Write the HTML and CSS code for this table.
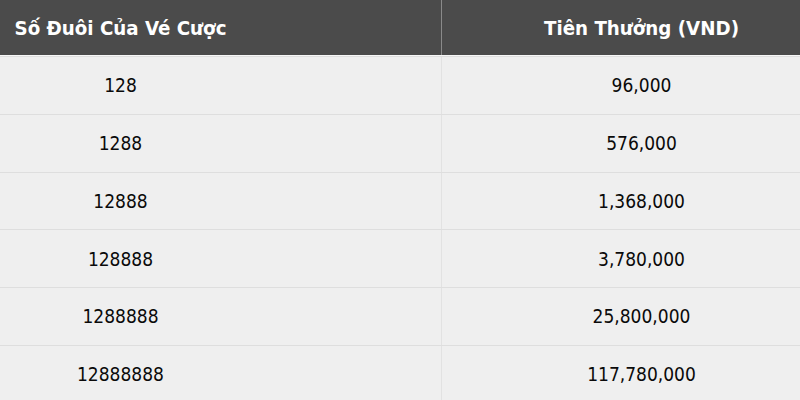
FILE: index.html
```html
<!DOCTYPE html>
<html lang="vi">
<head>
<meta charset="utf-8">
<link rel="stylesheet" href="styles.css">
</head>
<body>
<div class="table">
  <div class="row head">
    <div class="cell c1">Số Đuôi Của Vé Cược</div>
    <div class="cell c2">Tiên Thưởng (VND)</div>
  </div>
  <div class="row">
    <div class="cell c1">128</div>
    <div class="cell c2">96,000</div>
  </div>
  <div class="row">
    <div class="cell c1">1288</div>
    <div class="cell c2">576,000</div>
  </div>
  <div class="row">
    <div class="cell c1">12888</div>
    <div class="cell c2">1,368,000</div>
  </div>
  <div class="row">
    <div class="cell c1">128888</div>
    <div class="cell c2">3,780,000</div>
  </div>
  <div class="row">
    <div class="cell c1">1288888</div>
    <div class="cell c2">25,800,000</div>
  </div>
  <div class="row">
    <div class="cell c1">12888888</div>
    <div class="cell c2">117,780,000</div>
  </div>
</div>
</body>
</html>
```
FILE: styles.css
```css
html, body {
  margin: 0;
  padding: 0;
  width: 800px;
  height: 400px;
  overflow: hidden;
  background: #efefef;
}
.table {
  font-family: "DejaVu Sans Condensed", "DejaVu Sans", sans-serif;
  font-size: 19px;
  color: #0a0a0a;
}
.row {
  display: grid;
  grid-template-columns: 442px 358px;
  height: 57.75px;
  box-sizing: border-box;
  border-top: 1px solid #dedede;
  background: #efefef;
}
.row.head {
  height: 56px;
  border-top: none;
  border-bottom: 1px solid #f7f7f7;
  background: #4b4b4b;
  color: #fff;
  font-weight: bold;
  font-size: 20.3px;
}
.cell {
  display: flex;
  align-items: center;
  justify-content: center;
}
.c1 {
  padding-right: 200px;
  border-right: 1px solid #e2e2e2;
}
.head .c1 {
  border-right-color: #8a8a8a;
}
.c2 {
  padding-left: 41px;
}
```
